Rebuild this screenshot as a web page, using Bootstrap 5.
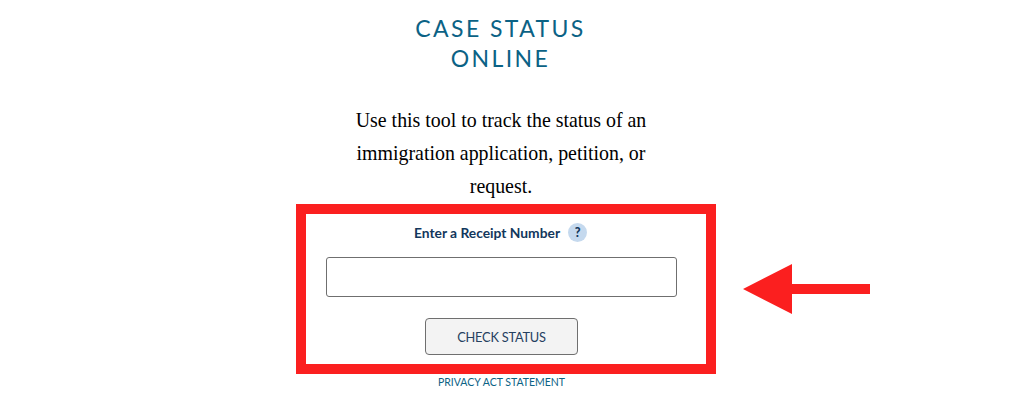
<!DOCTYPE html>
<html lang="en">
<head>
<meta charset="utf-8">
<title>Case Status Online</title>
<link href="https://cdn.jsdelivr.net/npm/bootstrap@5.3.0/dist/css/bootstrap.min.css" rel="stylesheet">
<style>
html, body { height: 410px; overflow: hidden; background: #fff; }
.stage { position: relative; width: 1024px; height: 410px; padding-top: 13px; }
.column { width: 351px; margin-left: 326px; }
.heading { font: 400 23px/30px "Lato", sans-serif; letter-spacing: 2.4px; color: #0b6285; text-align: center; margin: 0 0 31px -2px; }
.intro { font: 400 19.9px/33px "Liberation Serif", serif; color: #000; text-align: center; width: 310px; margin: 0 0 20px 20px; }
.field-label { font: 700 13.8px/19px "Lato", sans-serif; color: #12375c; gap: 8px; margin: 0 2px 15px 0; }
.help-dot { width: 19px; height: 19px; border-radius: 50%; background: #c5d9ee; color: #12375c; font-size: 12.5px; font-weight: 900; line-height: 19px; text-align: center; }
.receipt-input { height: 40px; border: 1px solid #6f6f6f; border-radius: 3px; margin-bottom: 21px; }
.check-btn { width: 153px; height: 37px; padding: 0; background: #f3f3f3; border: 1px solid #6f6f6f; border-radius: 4px; color: #25405f; font: 400 12.8px "Lato", sans-serif; letter-spacing: -.2px; }
.privacy-link { font: 400 10.5px/14px "Lato", sans-serif; color: #0b6285; text-decoration: none; margin-top: 20px; }
.mark-box { position: absolute; left: 296px; top: 204px; width: 420px; height: 170px; border: 10px solid #fb1f1f; pointer-events: none; }
.mark-arrow { position: absolute; left: 743px; top: 264px; }
</style>
</head>
<body>
<div class="stage">
  <div class="column d-flex flex-column">
    <h1 class="heading">CASE STATUS<br>ONLINE</h1>
    <p class="intro">Use this tool to track the status of an immigration application, petition, or request.</p>
    <label class="field-label d-flex justify-content-center align-items-center" for="receipt">Enter a Receipt Number <span class="help-dot">?</span></label>
    <input id="receipt" class="receipt-input form-control" type="text">
    <div class="text-center"><button class="check-btn btn" type="button">CHECK STATUS</button></div>
    <a class="privacy-link text-center" href="#">PRIVACY ACT STATEMENT</a>
  </div>
  <div class="mark-box"></div>
  <svg class="mark-arrow" width="128" height="50" viewBox="0 0 128 50" aria-hidden="true"><path d="M0 25 49 0V20H127V30H49V50Z" fill="#fb1f1f"/></svg>
</div>
<script src="https://cdn.jsdelivr.net/npm/bootstrap@5.3.0/dist/js/bootstrap.bundle.min.js"></script>
</body>
</html>
